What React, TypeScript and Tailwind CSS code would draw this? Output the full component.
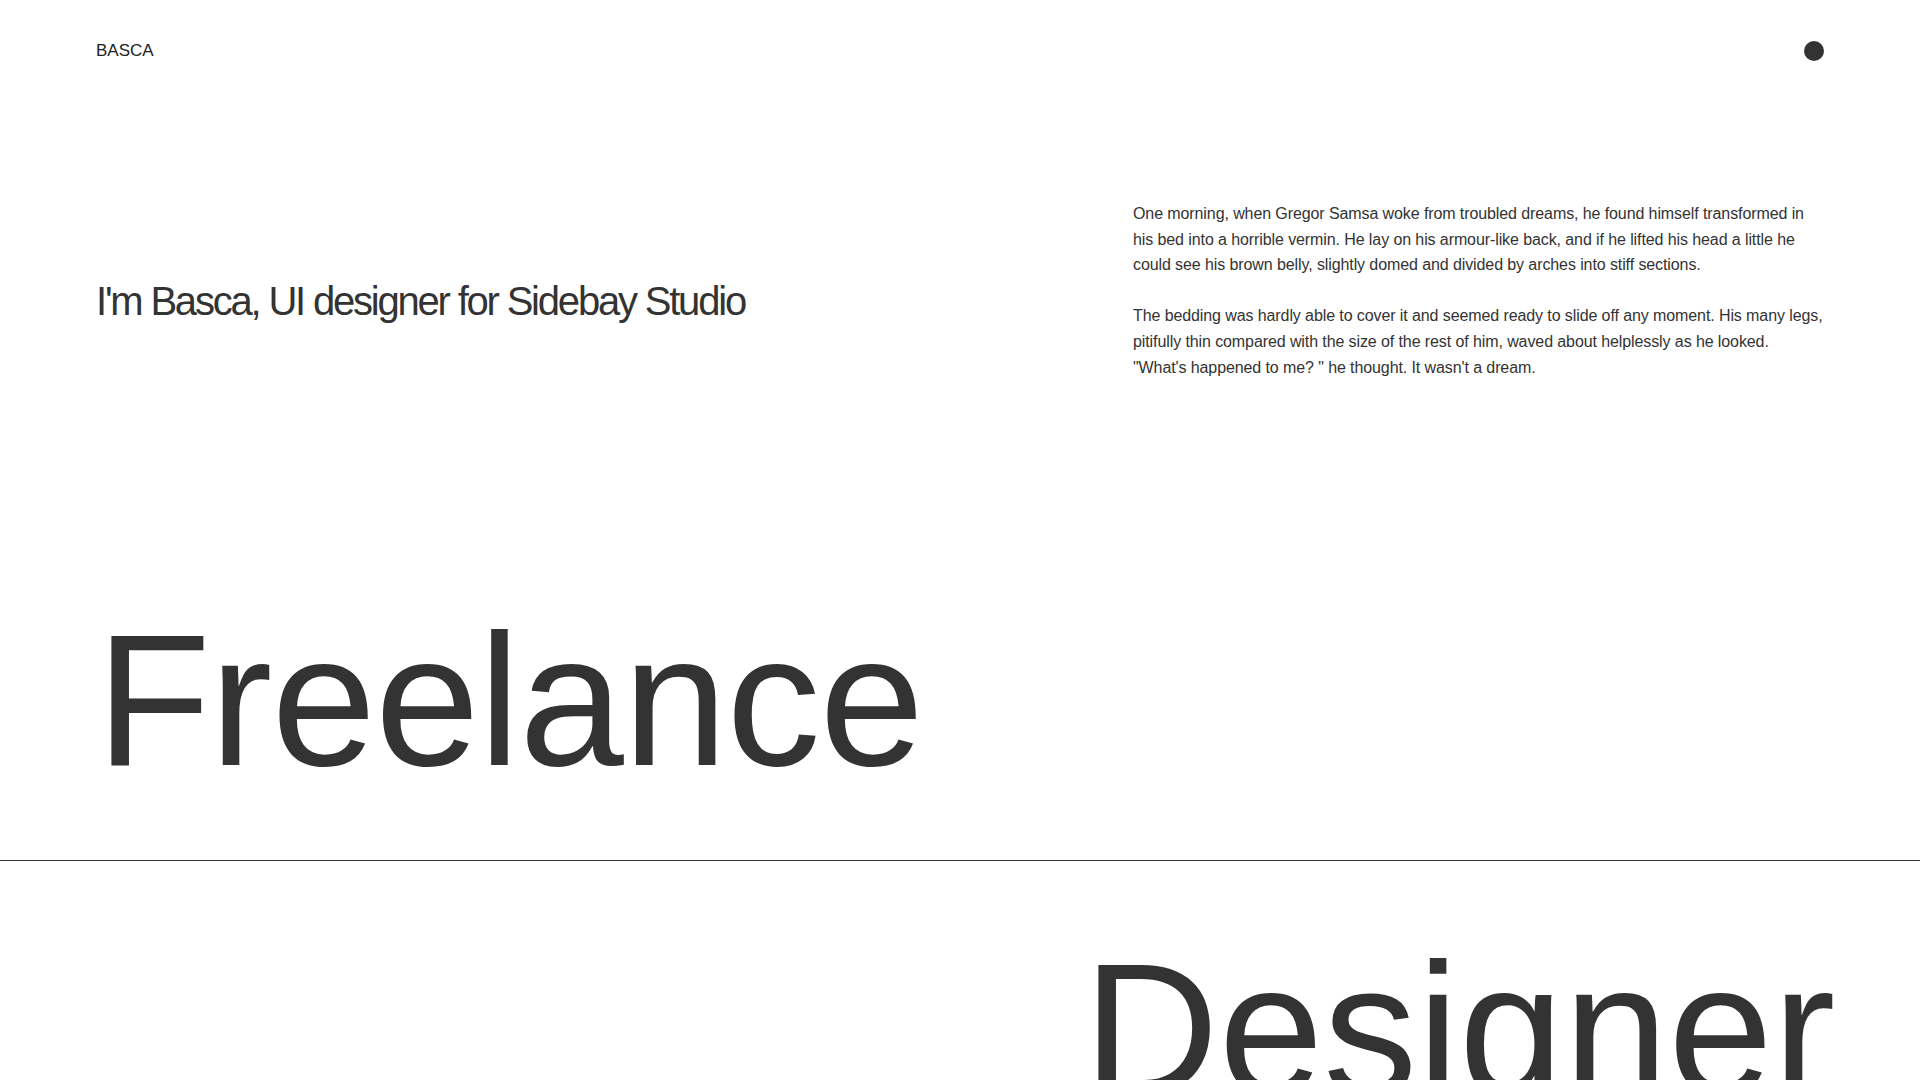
export default function App(): JSX.Element {
  return (
    <div className="min-h-screen bg-white text-[#333333] font-['Liberation_Sans',Arial,sans-serif]">
      <header className="flex items-center justify-between h-[102px] px-24">
        <span className="text-[17px] text-[#222222]">BASCA</span>
        <span className="block w-5 h-5 rounded-full bg-[#333333]"></span>
      </header>

      <section className="border-b border-[#333333] pb-[66px]">
        <div className="px-24">
          <div className="flex justify-between pt-[99px]">
            <h1 className="mt-[76px] text-[40px] leading-[48px] tracking-[-0.055em]">
              I'm Basca, UI designer for Sidebay Studio
            </h1>
            <div className="w-[691px] text-base leading-[25.6px] tracking-[-0.006em] whitespace-nowrap">
              <p className="mb-[25.6px]">
                One morning, when Gregor Samsa woke from troubled dreams, he found himself transformed in
                <br />
                his bed into a horrible vermin. He lay on his armour-like back, and if he lifted his head a little he
                <br />
                could see his brown belly, slightly domed and divided by arches into stiff sections.
              </p>
              <p>
                The bedding was hardly able to cover it and seemed ready to slide off any moment. His many legs,
                <br />
                pitifully thin compared with the size of the rest of him, waved about helplessly as he looked.
                <br />
                "What's happened to me? " he thought. It wasn't a dream.
              </p>
            </div>
          </div>
          <h2 className="mt-[226px] text-[188px] leading-none tracking-[-1px]">Freelance</h2>
        </div>
      </section>

      <section className="px-24 pt-[74px] pb-24">
        <h2 className="pl-[987px] text-[188px] leading-none whitespace-nowrap">Designer</h2>
      </section>
    </div>
  )
}
